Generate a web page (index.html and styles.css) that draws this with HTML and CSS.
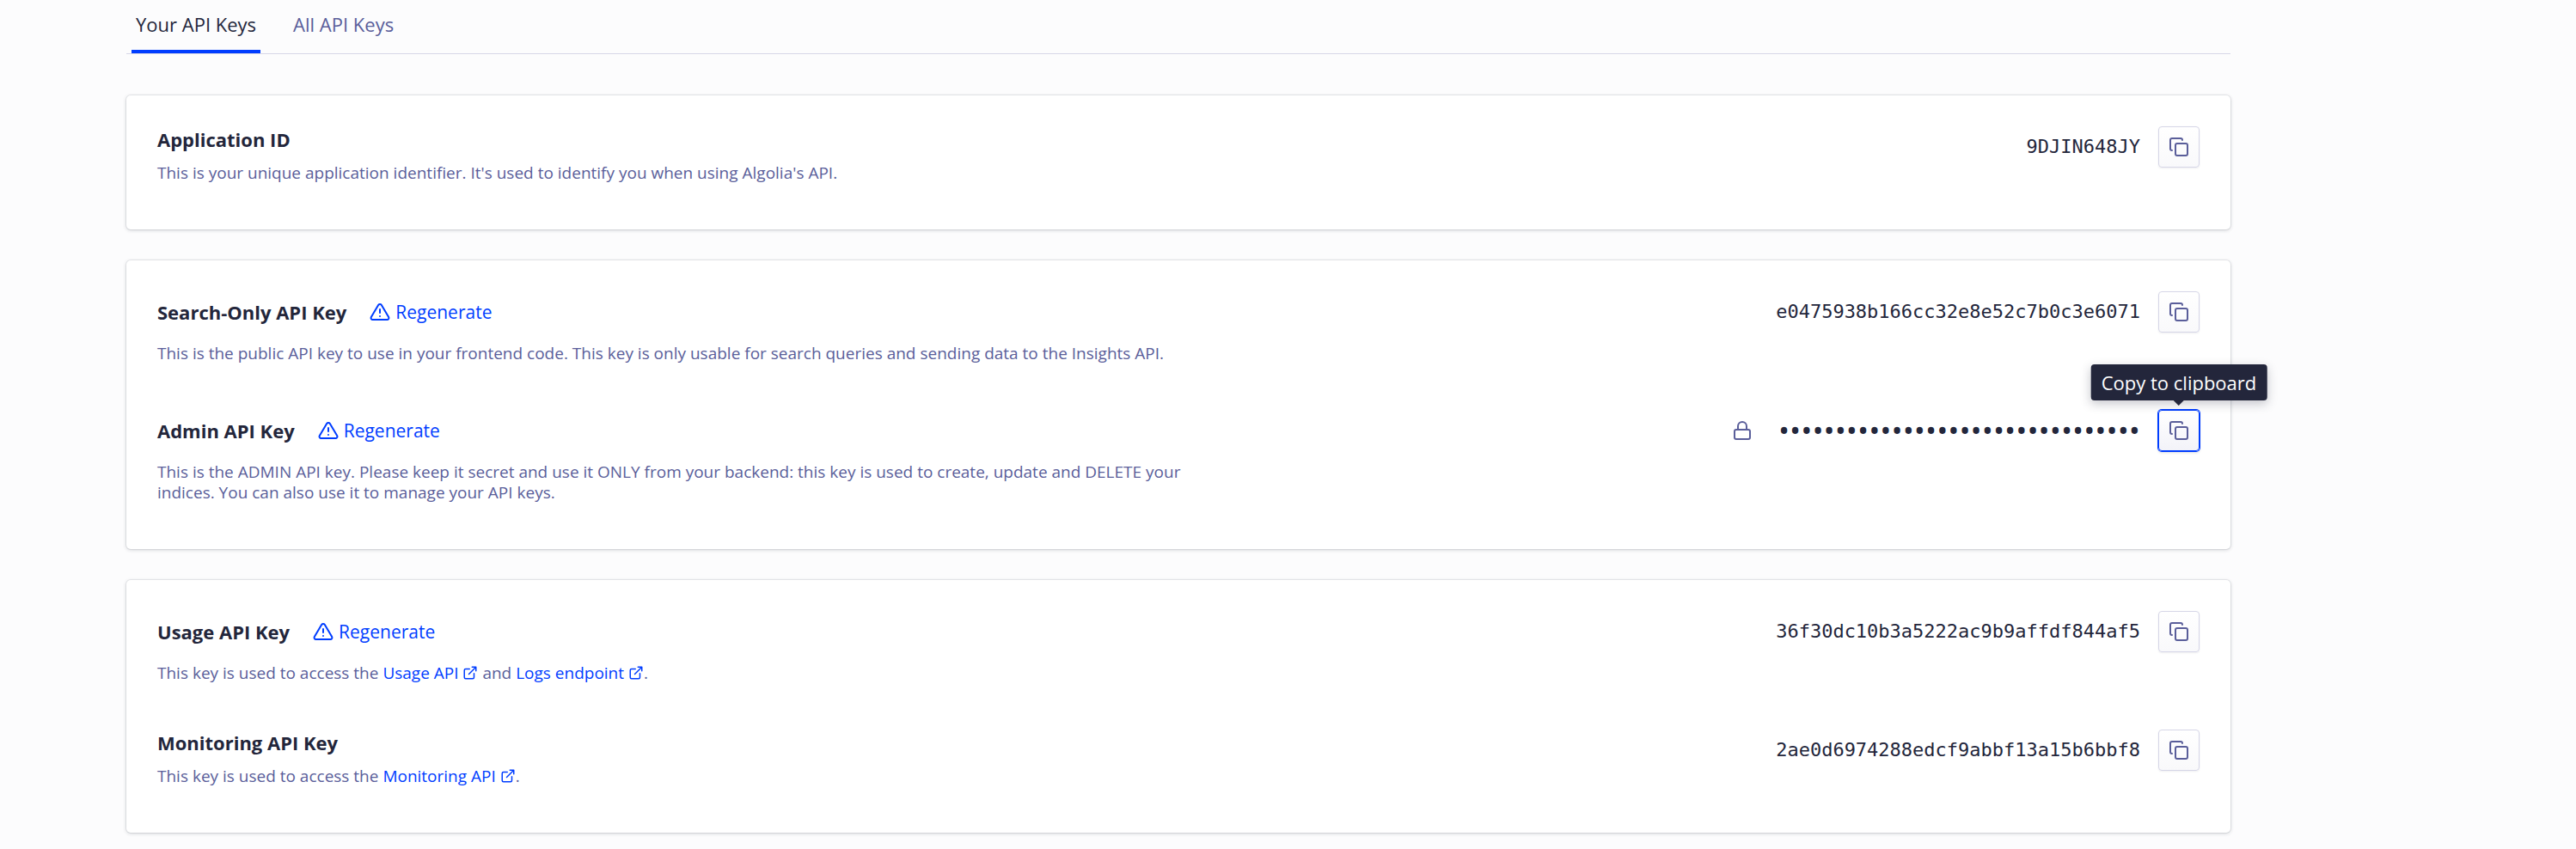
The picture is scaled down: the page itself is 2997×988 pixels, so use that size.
FILE: index.html
```html
<!DOCTYPE html>
<html lang="en">
<head>
<meta charset="utf-8">
<title>API Keys</title>
<link rel="stylesheet" href="styles.css">
</head>
<body>
<svg class="sprite" aria-hidden="true">
  <symbol id="copy" viewBox="0 0 24 24"><rect x="8" y="8" width="14" height="14" rx="2"/><path d="M4 16c-1.100 0-2-.9-2-2V4c0-1.100.9-2 2-2h10c1.100 0 2 .9 2 2"/></symbol>
  <symbol id="alert" viewBox="0 0 24 24"><path d="M10.290 3.860 1.820 18a2 2 0 0 0 1.710 3h16.940a2 2 0 0 0 1.710-3L13.710 3.860a2 2 0 0 0-3.420 0z"/><path d="M12 9v4M12 17h.01"/></symbol>
  <symbol id="lock" viewBox="0 0 24 24"><rect x="3" y="11" width="18" height="11" rx="2"/><path d="M7 11V7a5 5 0 0 1 10 0v4"/></symbol>
  <symbol id="external" viewBox="0 0 24 24"><path d="M18 13v6a2 2 0 0 1-2 2H5a2 2 0 0 1-2-2V8a2 2 0 0 1 2-2h6M15 3h6v6M10 14 21 3"/></symbol>
</svg>
<main class="page">
  <nav class="tabs">
    <a class="tab tab-active" href="#your" aria-current="page">Your API Keys</a>
    <a class="tab" href="#all">All API Keys</a>
  </nav>

  <section class="card">
    <div class="row">
      <div class="info">
        <h2 class="title">Application ID</h2>
        <p class="desc">This is your unique application identifier. It's used to identify you when using Algolia's API.</p>
      </div>
      <div class="value">
        <code class="key">9DJIN648JY</code>
        <button class="copy" type="button" aria-label="Copy to clipboard"><svg class="icon"><use href="#copy"/></svg></button>
      </div>
    </div>
  </section>

  <section class="card">
    <div class="row">
      <div class="info">
        <div class="head">
          <h2 class="title">Search-Only API Key</h2>
          <button class="regen" type="button"><svg class="icon"><use href="#alert"/></svg>Regenerate</button>
        </div>
        <p class="desc">This is the public API key to use in your frontend code. This key is only usable for search queries and sending data to the Insights API.</p>
      </div>
      <div class="value">
        <code class="key">e0475938b166cc32e8e52c7b0c3e6071</code>
        <button class="copy" type="button" aria-label="Copy to clipboard"><svg class="icon"><use href="#copy"/></svg></button>
      </div>
    </div>
    <div class="row">
      <div class="info">
        <div class="head">
          <h2 class="title">Admin API Key</h2>
          <button class="regen" type="button"><svg class="icon"><use href="#alert"/></svg>Regenerate</button>
        </div>
        <p class="desc">This is the ADMIN API key. Please keep it secret and use it ONLY from your backend: this key is used to create, update and DELETE your indices. You can also use it to manage your API keys.</p>
      </div>
      <div class="value">
        <svg class="icon lock"><use href="#lock"/></svg>
        <code class="key key-masked">••••••••••••••••••••••••••••••••</code>
        <button class="copy copy-focus" type="button" aria-describedby="tip" aria-label="Copy admin key"><svg class="icon"><use href="#copy"/></svg><span class="tip" id="tip" role="tooltip">Copy to clipboard</span></button>
      </div>
    </div>
  </section>

  <section class="card">
    <div class="row">
      <div class="info">
        <div class="head">
          <h2 class="title">Usage API Key</h2>
          <button class="regen" type="button"><svg class="icon"><use href="#alert"/></svg>Regenerate</button>
        </div>
        <p class="desc">This key is used to access the <a class="link" href="#usage">Usage API <svg class="ext"><use href="#external"/></svg></a> and <a class="link" href="#logs">Logs endpoint <svg class="ext"><use href="#external"/></svg></a>.</p>
      </div>
      <div class="value">
        <code class="key">36f30dc10b3a5222ac9b9affdf844af5</code>
        <button class="copy" type="button" aria-label="Copy to clipboard"><svg class="icon"><use href="#copy"/></svg></button>
      </div>
    </div>
    <div class="row">
      <div class="info">
        <h2 class="title">Monitoring API Key</h2>
        <p class="desc">This key is used to access the <a class="link" href="#monitoring">Monitoring API <svg class="ext"><use href="#external"/></svg></a>.</p>
      </div>
      <div class="value">
        <code class="key">2ae0d6974288edcf9abbf13a15b6bbf8</code>
        <button class="copy" type="button" aria-label="Copy to clipboard"><svg class="icon"><use href="#copy"/></svg></button>
      </div>
    </div>
  </section>
</main>
</body>
</html>
```
FILE: styles.css
```css
* { box-sizing: border-box; }

body {
  margin: 0;
  background: #fcfcfd;
  color: #23263b;
  font-family: "Segoe UI", "Open Sans", "Noto Sans", sans-serif;
  font-size: 22px;
  line-height: 30px;
}

.sprite { position: absolute; width: 0; height: 0; }

.page {
  display: flex;
  flex-direction: column;
  gap: 36px;
  min-height: 100vh;
  padding: 0 402px 18px 147px;
}

.tabs {
  display: flex;
  gap: 33px;
  padding: 0 6px;
  margin-bottom: 12px;
  border-bottom: 1px solid #d6d6e7;
}

.tab {
  padding: 13px 5px 15px;
  border-bottom: 4px solid transparent;
  color: #5a5e9a;
  text-decoration: none;
}

.tab-active { color: #23263b; border-color: #003dff; }

.card {
  display: flex;
  flex-direction: column;
  gap: 36px;
  padding: 36px;
  border-radius: 5px;
  background: #fff;
  box-shadow: 0 0 0 1px rgba(35, 38, 59, 0.07), 0 1px 4px rgba(35, 38, 59, 0.2);
}

.row {
  display: flex;
  justify-content: space-between;
  align-items: flex-start;
  gap: 36px;
}

.info { width: 52%; padding-bottom: 18px; }

.head { display: flex; align-items: center; gap: 27px; height: 48px; }

.title { margin: 0; font-size: 22px; font-weight: 700; line-height: 30px; }

.desc {
  margin: 12px 0 0;
  color: #5a5e9a;
  font-size: 19px;
  line-height: 24px;
}

.icon {
  width: 24px;
  height: 24px;
  fill: none;
  stroke: currentColor;
  stroke-width: 2;
  stroke-linecap: round;
  stroke-linejoin: round;
}

.regen {
  display: flex;
  align-items: center;
  gap: 6px;
  padding: 0;
  border: 0;
  background: none;
  color: #003dff;
  font: inherit;
  font-size: 21px;
}

.link { color: #003dff; text-decoration: none; white-space: nowrap; }

.ext {
  width: 18px;
  height: 18px;
  vertical-align: -2px;
  fill: none;
  stroke: currentColor;
  stroke-width: 2;
  stroke-linecap: round;
  stroke-linejoin: round;
}

.value { display: flex; align-items: center; gap: 21px; }

.key { font-family: "DejaVu Sans Mono", monospace; font-size: 22px; }

.key-masked { font-family: "Open Sans", sans-serif; font-size: 35px; }

.lock { color: #5a5e9a; margin-right: 9px; }

.copy {
  position: relative;
  display: grid;
  place-items: center;
  width: 48px;
  height: 48px;
  padding: 0;
  border: 1px solid #d6d6e7;
  border-radius: 4px;
  background: linear-gradient(#fff, #f9f9fb);
  box-shadow: 0 1px 2px rgba(35, 38, 59, 0.08);
  color: #5a5e9a;
  font: inherit;
}

.copy-focus {
  border-color: #003dff;
  background: linear-gradient(#fff, #f3f3f9);
  box-shadow: 0 0 0 1px #003dff, 0 2px 3px rgba(35, 38, 59, 0.15);
}

.tip {
  position: absolute;
  bottom: 100%;
  left: 50%;
  transform: translateX(-50%);
  margin-bottom: 12px;
  padding: 6px 12px;
  border-radius: 4px;
  background: #23263b;
  box-shadow: 0 4px 12px rgba(35, 38, 59, 0.25);
  color: #fff;
  white-space: nowrap;
}

.tip::after {
  content: "";
  position: absolute;
  top: 100%;
  left: 50%;
  margin-left: -6px;
  border: 6px solid transparent;
  border-top-color: #23263b;
  border-bottom: 0;
}
```
